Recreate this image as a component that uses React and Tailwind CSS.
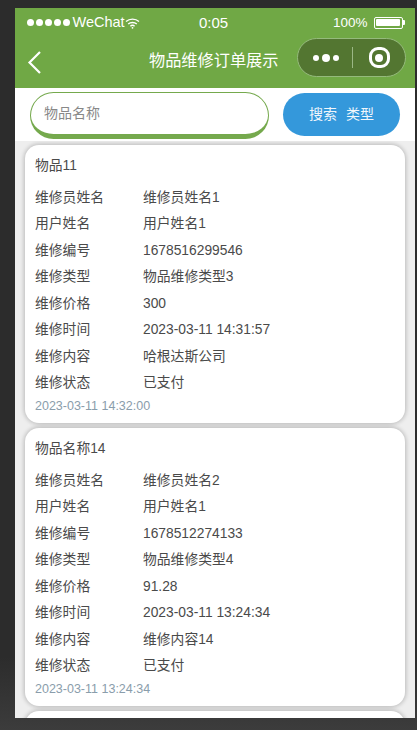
const rows1 = [
  ["维修员姓名", "维修员姓名1"],
  ["用户姓名", "用户姓名1"],
  ["维修编号", "1678516299546"],
  ["维修类型", "物品维修类型3"],
  ["维修价格", "300"],
  ["维修时间", "2023-03-11 14:31:57"],
  ["维修内容", "哈根达斯公司"],
  ["维修状态", "已支付"],
];
const rows2 = [
  ["维修员姓名", "维修员姓名2"],
  ["用户姓名", "用户姓名1"],
  ["维修编号", "1678512274133"],
  ["维修类型", "物品维修类型4"],
  ["维修价格", "91.28"],
  ["维修时间", "2023-03-11 13:24:34"],
  ["维修内容", "维修内容14"],
  ["维修状态", "已支付"],
];

function Card({ title, rows, date }) {
  return (
    <div className="h-[278px] shrink-0 rounded-[14px] bg-white pl-[10px] pt-[12px] shadow-[0_0_4px_1px_rgba(0,0,0,0.22)]">
      <div className="h-[18px] text-[13.8px] leading-[18px] text-[#4a4a4a]">{title}</div>
      <div className="mt-[10px] flex flex-col">
        {rows.map(([k, v]) => (
          <div key={k} className="flex h-[26.5px] items-center text-[13.8px] text-[#4a4a4a]">
            <span className="w-[108px]">{k}</span>
            <span>{v}</span>
          </div>
        ))}
      </div>
      <div className="mt-[1px] text-[12.5px] leading-[16px] text-[#8a9dab]">{date}</div>
    </div>
  );
}

export default function App() {
  return (
    <div className="flex h-[730px] w-[417px] flex-col overflow-hidden bg-[#2e2e2e] bg-gradient-to-b from-[#2c2c2c] from-90% to-[#3c3c3c] pl-[15px] pr-[2px] pt-[8px] font-['Liberation_Sans','Noto_Sans_CJK_SC',sans-serif]">
      <div className="flex h-[710px] flex-col overflow-hidden bg-[#eeeeee]">
        <div className="h-[80px] shrink-0 bg-[#70a845] text-white">
          <div className="flex h-[28px] items-center pl-[12px] pr-[10px] pt-[1px]">
            <div className="flex w-[133px] items-center">
              <div className="flex gap-[2.5px]">
                {[0, 1, 2, 3, 4].map((i) => (
                  <span key={i} className="size-[6.5px] rounded-full bg-white" />
                ))}
              </div>
              <span className="ml-[3px] text-[14.5px] leading-none">WeChat</span>
              <svg width="15" height="11" viewBox="0 0 15 11" className="mt-[1px]" fill="none" stroke="white" strokeWidth="1.4">
                <path d="M1 3.6C4.6.3 10.4.3 14 3.6" />
                <path d="M3.2 6C5.6 3.9 9.4 3.9 11.8 6" />
                <path d="M5.4 8.2C6.6 7.2 8.4 7.2 9.6 8.2" />
                <circle cx="7.5" cy="9.8" r="0.9" fill="white" stroke="none" />
              </svg>
            </div>
            <span className="ml-[39px] text-[15px] leading-none">0:05</span>
            <span className="ml-auto text-[13.5px] leading-none">100%</span>
            <div className="ml-[6px] flex items-center">
              <div className="h-[12px] w-[29px] rounded-[2px] border border-white p-[1.5px]">
                <div className="h-full w-full rounded-[1px] bg-white" />
              </div>
              <div className="h-[5px] w-[2.5px] rounded-r-[1px] bg-white" />
            </div>
          </div>
          <div className="relative flex h-[52px] items-center">
            <svg width="14" height="24" viewBox="0 0 14 24" className="ml-[12px] mb-[1px]" fill="none" stroke="white" strokeWidth="2.2">
              <path d="M13 2 2.5 12.5 13 23" />
            </svg>
            <span className="absolute left-[134px] top-[13px] text-[16.2px] leading-[22px] text-white">物品维修订单展示</span>
            <div className="absolute left-[282px] top-[2px] flex h-[39px] w-[109px] items-center rounded-full border border-[#95ba7c] bg-[#537631]">
              <div className="flex w-[54px] items-center justify-center gap-[3px] pl-[2px]">
                <span className="size-[6px] rounded-full bg-white" />
                <span className="size-[8px] rounded-full bg-white" />
                <span className="size-[6px] rounded-full bg-white" />
              </div>
              <div className="h-[21px] w-px bg-[#9bb785]" />
              <div className="flex flex-1 items-center justify-center">
                <div className="flex size-[21px] items-center justify-center rounded-[9px] border-[3px] border-white">
                  <span className="size-[8px] rounded-full bg-white" />
                </div>
              </div>
            </div>
          </div>
        </div>
        <div className="flex h-[53px] shrink-0 items-start bg-white pl-[15px] pt-[4px]">
          <div className="flex h-[47px] w-[239px] items-center rounded-[24px] border border-[#75a94d] border-b-[5px] bg-white pl-[13px] text-[14px] text-[#888]">
            物品名称
          </div>
          <div className="ml-[14px] mt-[1px] flex h-[43px] w-[117px] items-center justify-center gap-[9px] rounded-full bg-[#3498db] text-[14px] text-[#f0f6fb]">
            <span>搜索</span>
            <span>类型</span>
          </div>
        </div>
        <div className="flex flex-1 flex-col gap-[5px] overflow-hidden pl-[10px] pr-[10px] pt-[4px]">
          <Card title="物品11" rows={rows1} date="2023-03-11 14:32:00" />
          <Card title="物品名称14" rows={rows2} date="2023-03-11 13:24:34" />
          <div className="h-[40px] shrink-0 rounded-[14px] bg-white shadow-[0_0_4px_1px_rgba(0,0,0,0.22)]" />
        </div>
      </div>
    </div>
  );
}
